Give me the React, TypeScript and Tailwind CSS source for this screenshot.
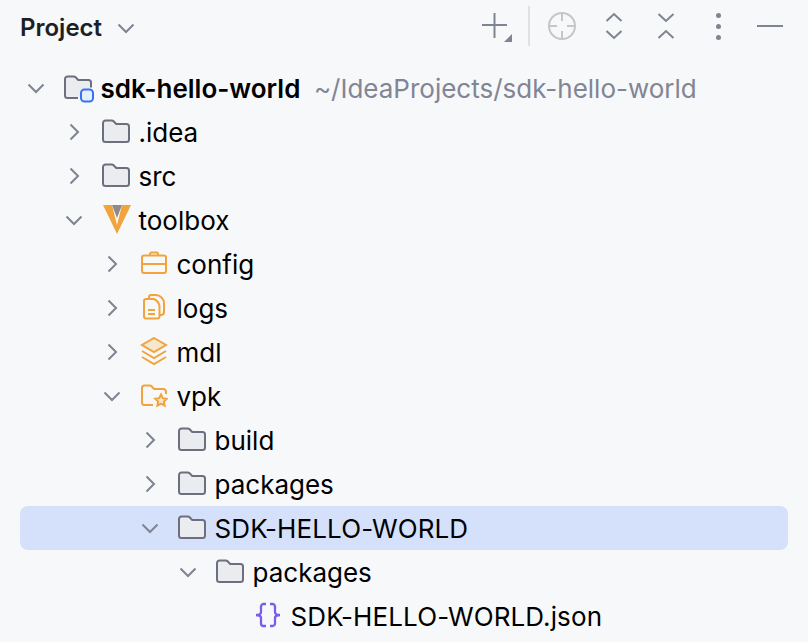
import React from "react";

const INDENT = ["pl-[4px]", "pl-[42px]", "pl-[80px]", "pl-[118px]", "pl-[156px]", "pl-[194px]"];

const ChevronDown = ({ className = "" }: { className?: string }) => (
    <svg width="24" height="24" viewBox="0 0 24 24" fill="none" stroke="#7f8491" strokeWidth="2" className={className}>
        <path d="M4.500 8.500 12 16l7.500-7.500" />
    </svg>
);

const ChevronRight = () => (
    <svg width="24" height="24" viewBox="0 0 24 24" fill="none" stroke="#7f8491" strokeWidth="2">
        <path d="M8.500 4.500 16 12l-7.500 7.500" />
    </svg>
);

const Folder = () => (
    <svg width="28" height="28" viewBox="0 0 28 28" fill="#ebecf0" stroke="#6c707e" strokeWidth="2">
        <path d="M1 5a2.500 2.500 0 0 1 2.500-2.500h6.300c.7 0 1.300.3 1.800.8l2.600 2.700h10.300A2.500 2.500 0 0 1 27 8.500v13a2.500 2.500 0 0 1-2.500 2.500h-21A2.500 2.500 0 0 1 1 21.500z" />
    </svg>
);

const RootFolder = () => (
    <svg width="32" height="30" viewBox="0 0 32 30" fill="none">
        <path d="M14 25H3.500A2.500 2.500 0 0 1 1 22.500V6a2.500 2.500 0 0 1 2.500-2.500h6.300c.7 0 1.300.3 1.800.8l2.600 2.700h10.300A2.500 2.500 0 0 1 27 9.500v5" fill="#ebecf0" stroke="#6c707e" strokeWidth="2" />
        <rect x="17" y="16.500" width="12" height="12" rx="3.500" fill="#e7effd" stroke="#3574f0" strokeWidth="2" />
    </svg>
);

const VeevaLogo = () => (
    <svg width="30" height="32" viewBox="0 0 30 32">
        <path d="M1 1h9l5 20 5-20h9L15 30z" fill="#f2a33c" />
        <path d="M10 1h10l-5 13z" fill="#8b8b8e" />
    </svg>
);

const Briefcase = () => (
    <svg width="28" height="28" viewBox="0 0 28 28" fill="none" stroke="#f2a33c" strokeWidth="2">
        <rect x="2" y="5.500" width="24" height="17.500" rx="2" />
        <path d="M10 5.500V4a1.500 1.500 0 0 1 1.500-1.500h5A1.500 1.500 0 0 1 18 4v1.500M2 14h24" />
    </svg>
);

const Logs = () => (
    <svg width="28" height="28" viewBox="0 0 28 28" fill="none" stroke="#f2a33c" strokeWidth="2">
        <path d="M9 5V3a2 2 0 0 1 2-2h5c4 0 8 4 8 8v9a3 3 0 0 1-3 3h-1.500" />
        <path d="M6 5h8c2 1 5 4 5.500 7v10.500a2 2 0 0 1-2 2H6a2 2 0 0 1-2-2V7a2 2 0 0 1 2-2z" />
        <path d="M8 16h7M8 20h7" />
    </svg>
);

const Layers = () => (
    <svg width="28" height="30" viewBox="0 0 28 30" fill="none" stroke="#f2a33c" strokeWidth="2">
        <path d="M14 1 26 8 14 15 2 8z" fill="#f6e7cf" />
        <path d="M2 14l12 7 12-7M2 20l12 7 12-7" />
    </svg>
);

const StarFolder = () => (
    <svg width="28" height="28" viewBox="0 0 28 28" fill="none">
        <path d="M13 23H4.500A2.500 2.500 0 0 1 2 20.500V6a2.500 2.500 0 0 1 2.500-2.500h5.300c.7 0 1.300.3 1.800.8L14 7h9.500A2.500 2.500 0 0 1 26 9.500V12" stroke="#f2a33c" strokeWidth="2" />
        <path d="m21 12.500 1.800 3.700 4 .6-2.900 2.800.7 4-3.600-1.900-3.600 1.900.7-4-2.900-2.800 4-.6z" fill="#f6e7cf" stroke="#f2a33c" strokeWidth="2" />
    </svg>
);

const Braces = () => (
    <svg width="28" height="28" viewBox="0 0 28 28" fill="none" stroke="#7b5cf0" strokeWidth="2.300">
        <path d="M12 2H9.500A2.500 2.500 0 0 0 7 4.500V10c0 1.500-1.500 3-5 3 3.500 0 5 1.500 5 3v5.500A2.500 2.500 0 0 0 9.500 24H12" />
        <path d="M16 2h2.500A2.500 2.500 0 0 1 21 4.500V10c0 1.500 1.500 3 5 3-3.500 0-5 1.500-5 3v5.500a2.500 2.500 0 0 1-2.500 2.500H16" />
    </svg>
);

type Node = {
    level: number;
    label: string;
    icon: React.ReactNode;
    open?: boolean;
    leaf?: boolean;
    selected?: boolean;
    caps?: boolean;
};

const nodes: Node[] = [
    { level: 1, label: ".idea", icon: <Folder /> },
    { level: 1, label: "src", icon: <Folder /> },
    { level: 1, label: "toolbox", icon: <VeevaLogo />, open: true },
    { level: 2, label: "config", icon: <Briefcase /> },
    { level: 2, label: "logs", icon: <Logs /> },
    { level: 2, label: "mdl", icon: <Layers /> },
    { level: 2, label: "vpk", icon: <StarFolder />, open: true },
    { level: 3, label: "build", icon: <Folder /> },
    { level: 3, label: "packages", icon: <Folder /> },
    { level: 3, label: "SDK-HELLO-WORLD", icon: <Folder />, open: true, selected: true, caps: true },
    { level: 4, label: "packages", icon: <Folder />, open: true },
    { level: 5, label: "SDK-HELLO-WORLD.json", icon: <Braces />, leaf: true, caps: true },
];

const Toolbar = () => (
    <div className="flex items-center pb-1">
        <svg width="34" height="32" viewBox="0 0 34 32" fill="none" className="mr-[13px]">
            <path d="M1 15h25M13.500 3v25" stroke="#7f8491" strokeWidth="2" />
            <path d="M31 24v8h-8z" fill="#7f8491" />
        </svg>
        <div className="w-[2px] h-10 bg-[#e0e1e5] mr-[17px]" />
        <svg width="30" height="30" viewBox="0 0 30 30" fill="none" stroke="#c5c6ca" strokeWidth="2" className="mr-[28px]">
            <circle cx="15" cy="15" r="13" />
            <path d="M15 2v8M15 20v8M2 15h8M20 15h8" />
        </svg>
        <svg width="18" height="28" viewBox="0 0 18 28" fill="none" stroke="#7f8491" strokeWidth="2" className="mr-[34px]">
            <path d="M1.500 9 9 2l7.500 7M1.500 19 9 26l7.500-7" />
        </svg>
        <svg width="18" height="28" viewBox="0 0 18 28" fill="none" stroke="#7f8491" strokeWidth="2" className="mr-[41px]">
            <path d="M1.500 2 9 9l7.500-7M1.500 26 9 19l7.500 7" />
        </svg>
        <div className="flex flex-col gap-[6px] mr-[36px]">
            <div className="w-[5px] h-[5px] rounded-full bg-[#7f8491]" />
            <div className="w-[5px] h-[5px] rounded-full bg-[#7f8491]" />
            <div className="w-[5px] h-[5px] rounded-full bg-[#7f8491]" />
        </div>
        <div className="w-[26px] h-[2px] bg-[#7f8491]" />
    </div>
);

const App: React.FC = () => {
    return (
        <div className="w-[808px] h-[642px] overflow-hidden bg-[#f7f8fa] text-black font-['Inter',sans-serif]">
            <div className="h-[56px] flex items-center justify-between pl-[20px] pr-[25px]">
                <div className="flex items-center">
                    <span className="text-[24px] font-semibold text-[#1e1f22]">Project</span>
                    <ChevronDown className="ml-[12px]" />
                </div>
                <Toolbar />
            </div>
            <div className="mt-[10px] px-5">
                <div className="h-11 flex items-center text-[26px] pl-[4px]">
                    <ChevronDown />
                    <div className="ml-4 w-[36.500px] shrink-0">
                        <RootFolder />
                    </div>
                    <span className="font-semibold">sdk-hello-world</span>
                    <span className="ml-[13.500px] text-[#818594]">~/IdeaProjects/sdk-hello-world</span>
                </div>
                {nodes.map((node, i) => (
                    <div
                        key={i}
                        className={`h-11 flex items-center text-[26px] rounded-lg ${INDENT[node.level]} ${node.selected ? "bg-[#d5e1fb]" : ""}`}
                    >
                        <div className="w-6 h-6 shrink-0">
                            {node.leaf ? null : node.open ? <ChevronDown /> : <ChevronRight />}
                        </div>
                        <div className="ml-4 w-[36.500px] h-8 shrink-0 flex items-center">{node.icon}</div>
                        <span className={`whitespace-nowrap ${node.caps ? "tracking-[0.12px]" : ""}`}>{node.label}</span>
                    </div>
                ))}
            </div>
        </div>
    );
};

export default App;
